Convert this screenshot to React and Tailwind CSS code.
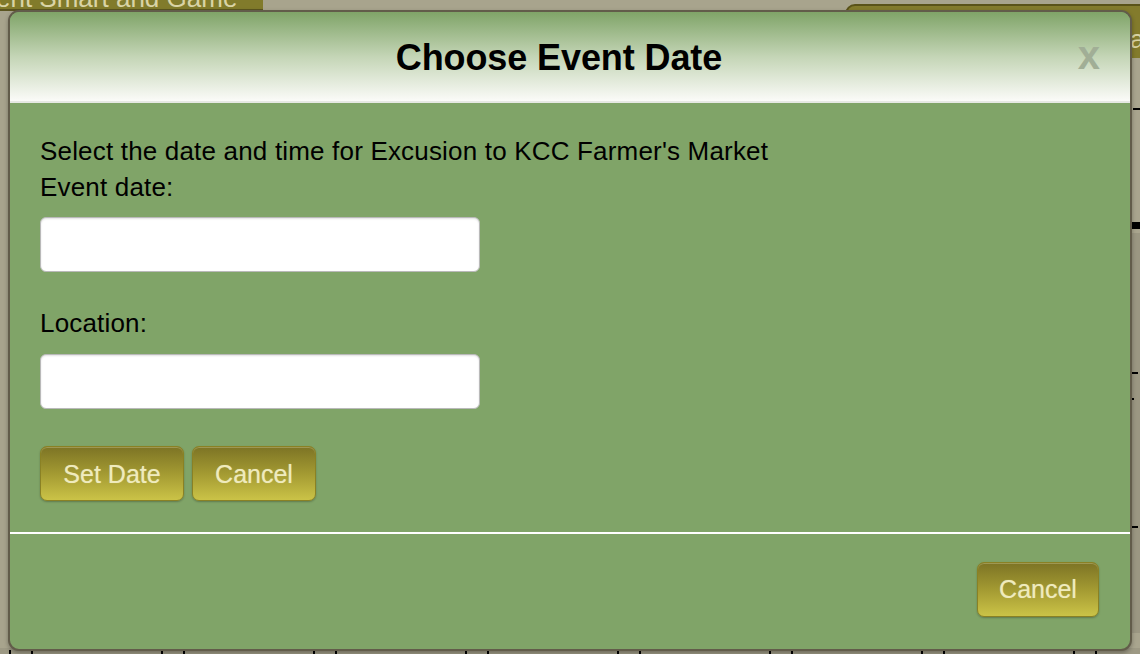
import React from 'react';

const ticks = [9, 31, 161, 183, 313, 335, 465, 487, 617, 639, 769, 791, 921, 943, 1073, 1095];

const OliveButton = ({ children, className = '' }) => (
  <button
    type="button"
    className={`h-[55px] rounded-[7px] border border-[#8a8124] bg-linear-to-b from-[#7d7425] via-[#a39a32] to-[#cbc347] text-[25px] text-[#efebbd] shadow-[inset_0_1px_0_rgba(255,255,220,0.25),0_1px_2px_rgba(0,0,0,0.25)] [text-shadow:0_0_1px_rgba(255,255,255,0.4)] ${className}`}
  >
    {children}
  </button>
);

export default function App() {
  return (
    <div
      className="relative w-[1140px] h-[654px] overflow-hidden bg-[#a8a48d]"
      style={{ fontFamily: '"Liberation Sans", Arial, sans-serif' }}
    >
      {/* page behind the dialog */}
      <div className="absolute left-0 top-0 w-[263px] h-[11px] bg-[#817b2b] border-b-2 border-[#5b5520] overflow-hidden">
        <span className="absolute left-[-4px] top-[-21px] text-[26px] text-[#d9d4a6] whitespace-nowrap">
          ent Smart and Game
        </span>
      </div>
      <div className="absolute left-[845px] top-[4px] w-[320px] h-[56px] rounded-tl-[10px] bg-[#837b2c] border-2 border-[#5a5319] overflow-hidden">
        <span className="absolute left-[283px] top-[14px] text-[26px] text-[#d9d4a6]">a</span>
      </div>
      <div className="absolute left-[1130px] top-[58px] w-[10px] h-[600px] bg-[#a9a58e]">
        <div className="absolute left-[3px] top-[50px] w-[7px] h-[2px] bg-black" />
        <div className="absolute left-0 top-[164px] w-[10px] h-[7px] bg-black" />
        <div className="absolute left-0 top-[175px] w-[10px] h-[400px] bg-[#9b9782]" />
        <div className="absolute left-[2px] top-[314px] w-[6px] h-[2px] bg-black" />
        <div className="absolute left-0 top-[340px] w-[4px] h-[2px] bg-black" />
        <div className="absolute left-[2px] top-[468px] w-[6px] h-[2px] bg-black" />
      </div>
      <div className="absolute left-0 top-[648px] w-[1140px] h-[6px] bg-[#9d9984]">
        {ticks.map((x) => (
          <div key={x} className="absolute top-[2px] w-[2px] h-[4px] bg-black" style={{ left: x }} />
        ))}
      </div>

      {/* dialog */}
      <div className="absolute left-[8px] top-[10px] w-[1124px] h-[641px] rounded-[11px] border-2 border-[#625c4a] bg-[#80a468] overflow-hidden shadow-[0_2px_4px_rgba(0,0,0,0.3)] flex flex-col">
        <div className="relative h-[91px] shrink-0 bg-linear-to-b from-[#80a468] via-[#c4d5b6] to-[#fbfbf8] flex items-center justify-center pr-[22px] border-b-2 border-[#e6e8e3]">
          <h2 className="text-[36px] font-bold text-black mt-[2px] tracking-[-0.1px]">Choose Event Date</h2>
          <span className="absolute right-[30px] top-[23px] text-[40px] font-bold leading-none text-[#a1ae96]">x</span>
        </div>

        <div className="h-[429px] shrink-0 pl-[30px] pt-[30px] text-[26px] leading-[36px] text-black tracking-[0.18px]">
          <p>Select the date and time for Excusion to KCC Farmer's Market</p>
          <p>Event date:</p>
          <input className="mt-[12px] block w-[440px] h-[55px] rounded-[6px] border border-[#b9b9b9] bg-white shadow-[inset_0_1px_2px_rgba(0,0,0,0.12)]" />
          <p className="mt-[33px]">Location:</p>
          <input className="mt-[13px] block w-[440px] h-[55px] rounded-[6px] border border-[#b9b9b9] bg-white shadow-[inset_0_1px_2px_rgba(0,0,0,0.12)]" />
          <div className="mt-[37px] flex gap-[8px] tracking-normal">
            <OliveButton className="w-[144px]">Set Date</OliveButton>
            <OliveButton className="w-[124px]">Cancel</OliveButton>
          </div>
        </div>

        <div className="h-[2px] shrink-0 bg-white" />

        <div className="flex justify-end pt-[28px] pr-[31px]">
          <OliveButton className="w-[122px] h-[54px]">Cancel</OliveButton>
        </div>
      </div>
    </div>
  );
}
